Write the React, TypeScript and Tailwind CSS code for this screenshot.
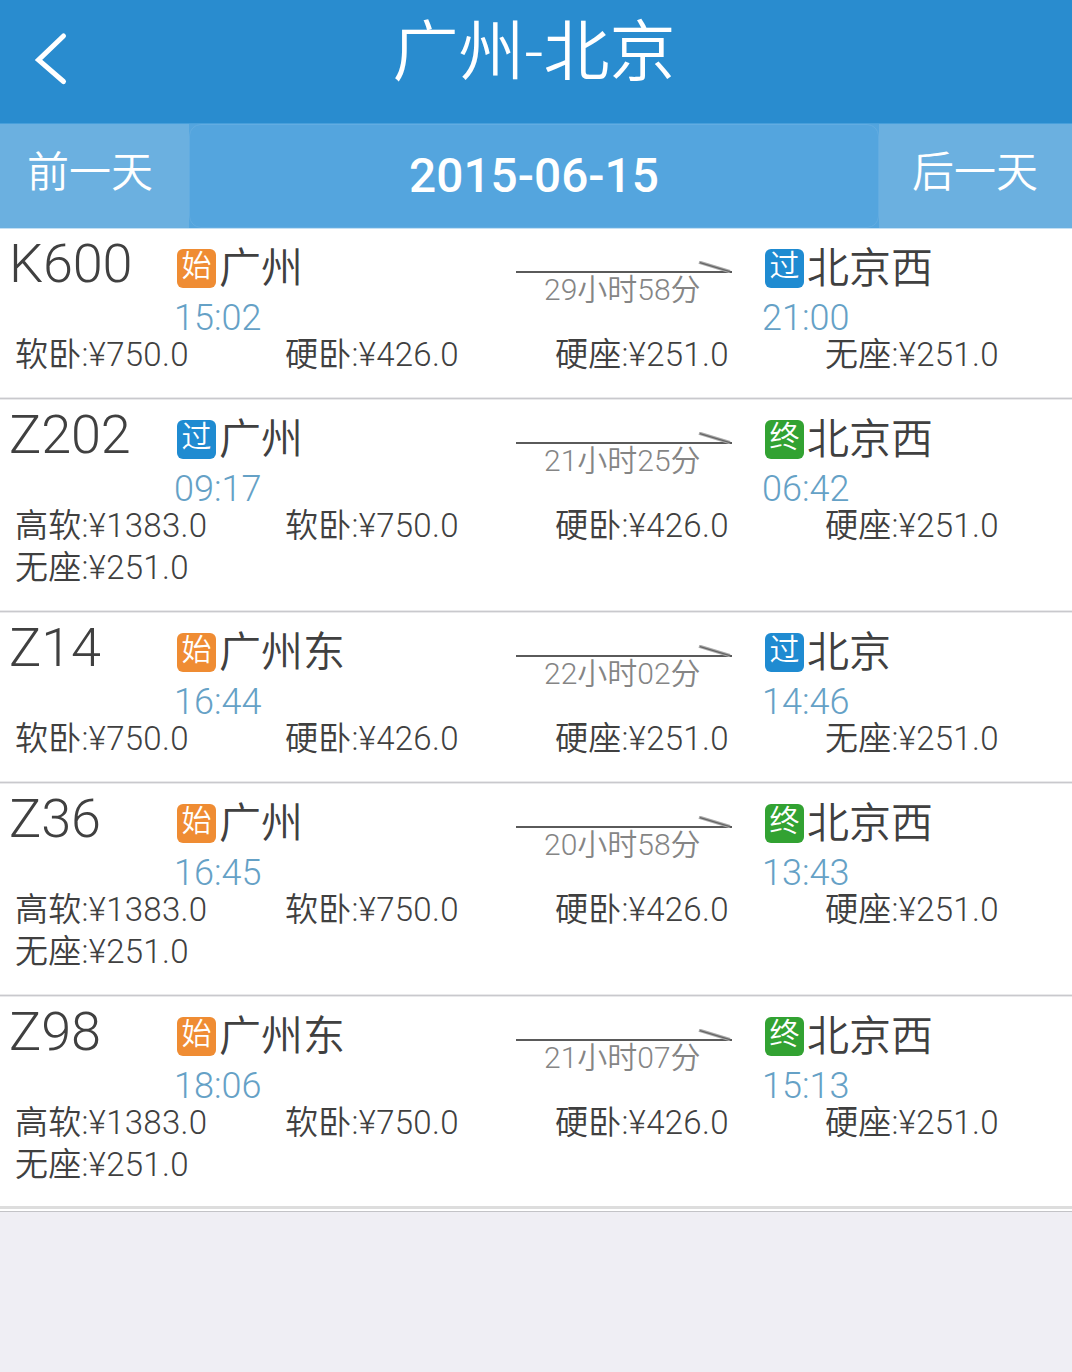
type StopKind = "start" | "pass" | "end";

interface Stop {
  kind: StopKind;
  name: string;
  time: string;
}

interface Train {
  code: string;
  from: Stop;
  to: Stop;
  duration: string;
  seats: string[];
}

const trains: Train[] = [
  {
    code: "K600",
    from: { kind: "start", name: "广州", time: "15:02" },
    to: { kind: "pass", name: "北京西", time: "21:00" },
    duration: "29小时58分",
    seats: ["软卧:¥750.0", "硬卧:¥426.0", "硬座:¥251.0", "无座:¥251.0"],
  },
  {
    code: "Z202",
    from: { kind: "pass", name: "广州", time: "09:17" },
    to: { kind: "end", name: "北京西", time: "06:42" },
    duration: "21小时25分",
    seats: ["高软:¥1383.0", "软卧:¥750.0", "硬卧:¥426.0", "硬座:¥251.0", "无座:¥251.0"],
  },
  {
    code: "Z14",
    from: { kind: "start", name: "广州东", time: "16:44" },
    to: { kind: "pass", name: "北京", time: "14:46" },
    duration: "22小时02分",
    seats: ["软卧:¥750.0", "硬卧:¥426.0", "硬座:¥251.0", "无座:¥251.0"],
  },
  {
    code: "Z36",
    from: { kind: "start", name: "广州", time: "16:45" },
    to: { kind: "end", name: "北京西", time: "13:43" },
    duration: "20小时58分",
    seats: ["高软:¥1383.0", "软卧:¥750.0", "硬卧:¥426.0", "硬座:¥251.0", "无座:¥251.0"],
  },
  {
    code: "Z98",
    from: { kind: "start", name: "广州东", time: "18:06" },
    to: { kind: "end", name: "北京西", time: "15:13" },
    duration: "21小时07分",
    seats: ["高软:¥1383.0", "软卧:¥750.0", "硬卧:¥426.0", "硬座:¥251.0", "无座:¥251.0"],
  },
];

const badges: Record<StopKind, { label: string; color: string }> = {
  start: { label: "始", color: "bg-[#ef8c33]" },
  pass: { label: "过", color: "bg-[#1f8bd1]" },
  end: { label: "终", color: "bg-[#32a232]" },
};

function StopInfo({ stop }: { stop: Stop }) {
  const badge = badges[stop.kind];
  return (
    <div className="pt-[19px]">
      <div className="flex h-[42px] items-start pl-1">
        <span
          className={`mt-[2px] h-[39px] w-[39px] rounded-md text-center text-[30px] leading-[34px] text-white ${badge.color}`}
        >
          {badge.label}
        </span>
        <span className="pl-[3px] text-[42px] leading-[43px]">{stop.name}</span>
      </div>
      <p className="mt-[11px] pl-px text-[36px] leading-[37px] text-[#65a1c6]">{stop.time}</p>
    </div>
  );
}

function TrainRow({ train }: { train: Train }) {
  return (
    <li className="border-b border-[#c9c9cd] pb-[22px] shadow-[inset_0_1px_0_#e9e9eb,inset_0_-1px_0_#e9e9eb] last:border-b-0 last:pb-[20px] last:shadow-[inset_0_1px_0_#e9e9eb]">
      <div className="grid h-[106px] grid-cols-[173px_343px_245px_auto]">
        <h2 className="pt-[9px] pl-[9px] text-[54px] leading-[54px] tracking-[-0.2px]">{train.code}</h2>
        <StopInfo stop={train.from} />
        <div className="pt-[33px]">
          <svg width="216" height="12" viewBox="0 0 216 12" fill="none">
            <path d="M0 11H216" stroke="#5a5a5a" strokeWidth="2" />
            <path d="M183 1.2L214 10.6" stroke="#aaa" strokeWidth="3.4" />
            <path d="M184 1.6L214 10.6" stroke="#666" strokeWidth="1.4" />
          </svg>
          <p className="mt-[2px] pl-[28px] text-[30px] leading-[30px] text-[#858585]">{train.duration}</p>
        </div>
        <StopInfo stop={train.to} />
      </div>
      <ul className="grid grid-cols-[270px_270px_270px_auto] pl-[15px] text-[33px] leading-[42px] tracking-[0.3px]">
        {train.seats.map((seat) => (
          <li key={seat}>{seat}</li>
        ))}
      </ul>
    </li>
  );
}

export default function App() {
  return (
    <div className="min-h-screen bg-[#efeef4] font-['Roboto','Noto_Sans_CJK_SC',sans-serif] font-[350] text-[#404040]">
      <header className="grid h-[123px] grid-cols-[189px_1fr_193px] bg-[#298ccf] text-white">
        <button className="flex items-start pt-[30px] pl-[32px]" aria-label="返回">
          <svg width="40" height="58" viewBox="0 0 40 58" fill="none">
            <path d="M31.500 6L6.500 30L31.500 51.500" stroke="#fff" strokeWidth="5" strokeLinecap="round" />
          </svg>
        </button>
        <h1 className="pt-[13px] text-center text-[66px] leading-[80px] font-[350]">广州-北京</h1>
      </header>

      <nav className="relative flex h-[105px] border-t border-[#479fdb] bg-[#54a5de] text-white shadow-[0_1px_0_#c4e0f4]">
        <button className="w-[189px] bg-[#6bb0e0] pb-[7px] pl-[27px] text-left text-[42px] leading-[42px]">
          前一天
        </button>
        <div className="w-[690px] rounded-[12px] border border-[#62ace1] text-center text-[47.8px] leading-[103px] font-medium">
          2015-06-15
        </div>
        <button className="w-[193px] bg-[#6bb0e0] pb-[7px] pl-[33px] text-left text-[42px] leading-[42px]">
          后一天
        </button>
      </nav>

      <ul className="border-b-[3px] border-[#dddddd] bg-white">
        {trains.map((train) => (
          <TrainRow key={train.code} train={train} />
        ))}
      </ul>
      <div className="h-[3px] border-b border-[#c3c3c7] bg-white" />
    </div>
  );
}
